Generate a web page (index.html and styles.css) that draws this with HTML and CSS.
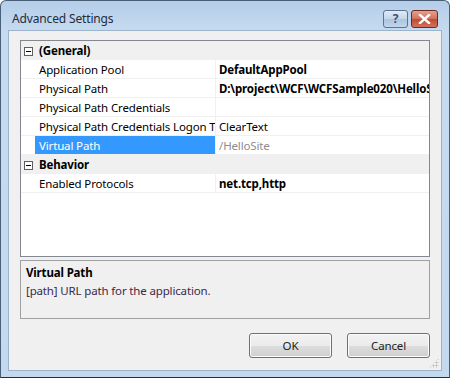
FILE: index.html
```html
<!DOCTYPE html>
<html lang="en">
<head>
	<meta charset="UTF-8">
	<title>Advanced Settings</title>
	<link rel="stylesheet" href="styles.css">
</head>
<body>
	<div class="window">
		<div class="titlebar">
			<span class="title">Advanced Settings</span>
			<div class="capBtns">
				<a href="javascript:;" class="helpBtn">?</a>
				<a href="javascript:;" class="closeBtn">
					<svg width="13" height="10" viewBox="0 0 13 10">
						<path d="M2 1 L11 9 M11 1 L2 9" stroke="#fff" stroke-width="2.4" stroke-linecap="square"/>
					</svg>
				</a>
			</div>
		</div>
		<div class="client">
			<div class="grid">
				<div class="row cat">
					<span class="toggle"></span>
					<span class="catName">(General)</span>
				</div>
				<div class="row">
					<span class="name">Application Pool</span>
					<span class="value bold">DefaultAppPool</span>
				</div>
				<div class="row">
					<span class="name">Physical Path</span>
					<span class="value bold">D:\project\WCF\WCFSample020\HelloSite</span>
				</div>
				<div class="row">
					<span class="name">Physical Path Credentials</span>
					<span class="value"></span>
				</div>
				<div class="row">
					<span class="name">Physical Path Credentials Logon Type</span>
					<span class="value">ClearText</span>
				</div>
				<div class="row selected">
					<span class="name">Virtual Path</span>
					<span class="value readonly">/HelloSite</span>
				</div>
				<div class="row cat">
					<span class="toggle"></span>
					<span class="catName">Behavior</span>
				</div>
				<div class="row">
					<span class="name">Enabled Protocols</span>
					<span class="value bold">net.tcp,http</span>
				</div>
			</div>
			<div class="help">
				<div class="helpTitle">Virtual Path</div>
				<div class="helpText">[path] URL path for the application.</div>
			</div>
			<div class="footer">
				<a href="javascript:;" class="btn">OK</a>
				<a href="javascript:;" class="btn">Cancel</a>
			</div>
			<span class="grip"></span>
		</div>
	</div>
</body>
</html>
```

FILE: styles.css
```css
*{
	margin: 0;
	padding: 0;
	box-sizing: border-box;
}
body{
	width: 450px;
	height: 378px;
	overflow: hidden;
	font-family: "Noto Sans", "Liberation Sans", sans-serif;
	font-size: 11.5px;
	letter-spacing: -0.15px;
	color: #000;
}
a{
	text-decoration: none;
	color: inherit;
}
.window{
	width: 450px;
	height: 378px;
	border: 1px solid #4a6078;
	border-bottom-color: #1f2f40;
	border-radius: 6px 6px 0 0;
	background: linear-gradient(#b4cde8, #c6dbf0 30px, #c4d9ee);
	padding: 0 7px 6px 7px;
	display: flex;
	flex-direction: column;
}
.titlebar{
	height: 29px;
	padding-top: 6px;
	display: flex;
	align-items: center;
	justify-content: space-between;
}
.title{
	padding-left: 4px;
	color: #1c2d40;
	font-size: 12px;
}
.capBtns{
	display: flex;
	gap: 3px;
	margin-right: 4px;
}
.capBtns a{
	height: 18px;
	border: 1px solid #5b7491;
	border-radius: 3px;
	display: flex;
	align-items: center;
	justify-content: center;
}
.helpBtn{
	width: 25px;
	background: linear-gradient(#e0ebf6, #c4d6ea 50%, #adc4de 51%, #c2d6ec);
	color: #3b5372;
	font-weight: bold;
	font-size: 12px;
	line-height: 16px;
}
.capBtns a.closeBtn{
	width: 27px;
	border-color: #6d2a1f;
	background: linear-gradient(#e4a090, #d1705b 50%, #c04a32 51%, #d2735c);
}
.client{
	flex: 1;
	background: #f0f0f0;
	border: 1px solid #9db3cc;
	padding: 9px 11px 12px 11px;
	display: flex;
	flex-direction: column;
	position: relative;
}
.grid{
	height: 217px;
	border: 1px solid #828790;
	background: #fff;
	overflow: hidden;
}
.row{
	display: flex;
	height: 19px;
	border-bottom: 1px solid #f0f0f0;
	line-height: 20px;
	white-space: nowrap;
}
.row.cat{
	background: #f0f0f0;
	border-bottom-color: #f0f0f0;
	align-items: center;
}
.toggle{
	width: 9px;
	height: 9px;
	margin: 2px 6px 0 3px;
	border: 1px solid #5e5e5e;
	background: #fff;
	position: relative;
}
.toggle:after{
	content: "";
	position: absolute;
	left: 1px;
	top: 3px;
	width: 5px;
	height: 1px;
	background: #000;
}
.catName{
	font-weight: bold;
	height: 18px;
}
.name{
	width: 181px;
	height: 18px;
	flex: none;
	margin-left: 14px;
	padding-left: 4px;
	overflow: hidden;
	border-right: 1px solid #f0f0f0;
}
.value{
	flex: 1;
	height: 18px;
	padding-left: 3px;
	overflow: hidden;
}
.bold{
	font-weight: bold;
}
.row.selected .name{
	background: #3399ff;
	color: #fff;
}
.readonly{
	color: #8d8d8d;
}
.help{
	margin-top: 3px;
	height: 59px;
	border: 1px solid #a0a0a0;
	padding: 3px 5px;
	line-height: 18px;
}
.helpTitle{
	font-weight: bold;
}
.helpText{
	color: #3a2a4a;
}
.footer{
	margin-top: auto;
	display: flex;
	justify-content: flex-end;
	gap: 15px;
}
.btn{
	width: 83px;
	height: 25px;
	border: 1px solid #707070;
	border-radius: 3px;
	background: linear-gradient(#f2f2f2, #ebebeb 50%, #dddddd 51%, #cfcfcf);
	box-shadow: inset 0 0 0 1px #fcfcfc;
	display: flex;
	align-items: center;
	justify-content: center;
	color: #222;
}
.grip{
	position: absolute;
	right: 2px;
	bottom: 2px;
	width: 10px;
	height: 10px;
	background: radial-gradient(circle, #b8b8b8 0.8px, transparent 1.2px) 0 0 / 3px 3px;
	clip-path: polygon(100% 0, 100% 100%, 0 100%);
}
```
